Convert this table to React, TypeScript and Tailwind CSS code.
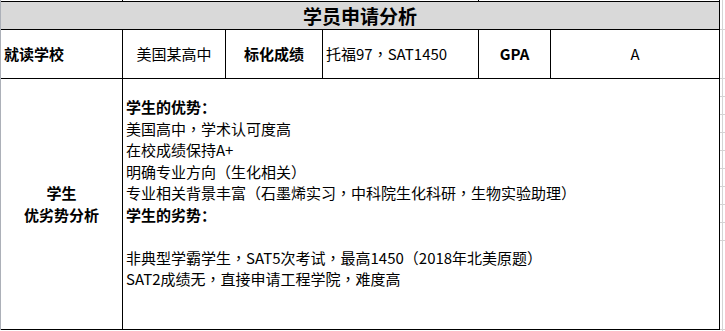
// full-width commas sit in the middle of the cell in the reference, as in the TC font
function Text({ value }: { value: string }) {
  const parts = value.split('，');
  return (
    <>
      {parts.map((part, i) => (
        <span key={i}>
          {part}
          {i < parts.length - 1 && (
            <span style={{ fontFamily: '"Noto Sans CJK TC", sans-serif' }}>，</span>
          )}
        </span>
      ))}
    </>
  );
}

export default function App() {
  const strengths = [
    '美国高中，学术认可度高',
    '在校成绩保持A+',
    '明确专业方向（生化相关）',
    '专业相关背景丰富（石墨烯实习，中科院生化科研，生物实验助理）',
  ];
  const weaknesses = [
    '非典型学霸学生，SAT5次考试，最高1450（2018年北美原题）',
    'SAT2成绩无，直接申请工程学院，难度高',
  ];
  const gridRows = [30, 49, 18, 18, 18, 18, 18, 18, 18, 18, 18, 89];

  return (
    <div
      className="w-[725px] h-[331px] bg-white flex text-black text-[15px]"
      style={{ fontFamily: '"Noto Sans CJK SC", "Noto Sans", sans-serif' }}
    >
      <div className="w-[720px] h-[330px] flex flex-col border-l border-l-[#acb0b8] border-r border-r-black">
        {/* row above the table */}
        <div className="h-px flex">
          <div className="w-[122px] border-r border-black" />
          <div className="w-[356px] border-r border-black" />
          <div className="flex-1" />
        </div>

        <div className="h-[29px] border-y border-black bg-[#d9d9d9] flex items-center justify-center">
          <span className="text-[19px] font-bold leading-none">学员申请分析</span>
        </div>

        <div className="h-[49px] border-b border-black flex">
          <div className="w-[122px] border-r border-black flex items-center pl-[3px] font-bold">
            就读学校
          </div>
          <div className="w-[103px] border-r border-black flex items-center justify-center">
            美国某高中
          </div>
          <div className="w-[97px] border-r border-black flex items-center justify-center font-bold">
            标化成绩
          </div>
          <div className="w-[156px] border-r border-black flex items-center pl-[3px]">
            <Text value="托福97，SAT1450" />
          </div>
          <div className="w-[72px] border-r border-black flex items-center justify-center font-bold">
            GPA
          </div>
          <div className="flex-1 flex items-center justify-center">A</div>
        </div>

        <div className="h-[251px] border-b border-black flex">
          <div className="w-[122px] border-r border-black flex flex-col items-center justify-center font-bold leading-[22px]">
            <span>学生</span>
            <span>优劣势分析</span>
          </div>
          <div className="flex-1 pl-[3px] pt-[17px] leading-[21.5px]">
            <p className="font-bold">学生的优势：</p>
            {strengths.map((s) => (
              <p key={s}>
                <Text value={s} />
              </p>
            ))}
            <p className="font-bold">学生的劣势：</p>
            <p>&nbsp;</p>
            {weaknesses.map((s) => (
              <p key={s}>
                <Text value={s} />
              </p>
            ))}
          </div>
        </div>
      </div>

      {/* spreadsheet gridlines beside the table */}
      <div className="w-[5px] flex flex-col bg-[linear-gradient(to_right,transparent_2px,#d4d4d4_2px,#d4d4d4_3px,transparent_3px)]">
        {gridRows.map((h, i) => (
          <div key={i} className="border-b border-[#d4d4d4]" style={{ height: h }} />
        ))}
      </div>
    </div>
  );
}
